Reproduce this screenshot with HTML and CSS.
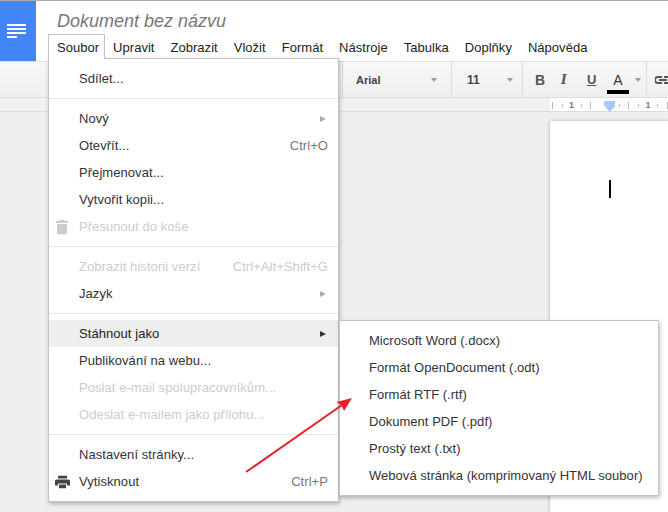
FILE: index.html
```html
<!DOCTYPE html>
<html lang="cs">
<head>
<meta charset="utf-8">
<title>Dokument bez názvu</title>
<link rel="stylesheet" href="styles.css">
</head>
<body>
<div class="app">
  <header class="header">
    <div class="logo">
      <svg width="19" height="14" viewBox="0 0 19 14"><path fill="#fff" d="M0 0h19v2H0zM0 4h19v2H0zM0 8h19v2H0zM0 12h10v2H0z"/></svg>
    </div>
    <div class="head-main">
      <div class="doc-title">Dokument bez názvu</div>
      <nav class="menubar">
        <span class="mb-item active">Soubor</span>
        <span class="mb-item">Upravit</span>
        <span class="mb-item">Zobrazit</span>
        <span class="mb-item">Vložit</span>
        <span class="mb-item">Formát</span>
        <span class="mb-item">Nástroje</span>
        <span class="mb-item">Tabulka</span>
        <span class="mb-item">Doplňky</span>
        <span class="mb-item">Nápověda</span>
      </nav>
    </div>
  </header>
  <div class="toolbar">
    <div class="tb-spacer"></div>
    <div class="tb-group tb-font"><span>Arial</span><i class="caret"></i></div>
    <div class="tb-group tb-size"><span>11</span><i class="caret"></i></div>
    <div class="tb-group tb-format">
      <b class="fmt fmt-b">B</b>
      <i class="fmt fmt-i">I</i>
      <u class="fmt fmt-u">U</u>
      <span class="fmt-color">A</span>
      <i class="caret"></i>
    </div>
    <div class="tb-link">
      <svg width="16" height="8" viewBox="0 0 16 8"><path fill="none" stroke="#555" stroke-width="2" d="M7 1H3a3 3 0 0 0 0 6h4M9 1h4a3 3 0 0 1 0 6H9M4 4h8"/></svg>
    </div>
  </div>
  <div class="ruler">
    <div class="ruler-track">
      <span class="tick"></span>
      <span class="tick-s"></span>
      <span class="num">1</span>
      <span class="tick-s"></span>
      <span class="tick"></span>
      <span class="empty"></span>
      <span class="marker"></span>
      <span class="tick-s"></span>
      <span class="tick"></span>
      <span class="tick-s"></span>
      <span class="num">1</span>
      <span class="tick-s"></span>
      <span class="tick"></span>
    </div>
  </div>
  <main class="canvas">
    <div class="page"><span class="cursor"></span></div>
  </main>
</div>

<div class="menu file-menu">
  <div class="item"><span>Sdílet...</span></div>
  <hr>
  <div class="item"><span>Nový</span><i class="arrow"></i></div>
  <div class="item"><span>Otevřít...</span><span class="key">Ctrl+O</span></div>
  <div class="item"><span>Přejmenovat...</span></div>
  <div class="item"><span>Vytvořit kopii...</span></div>
  <div class="item off">
    <svg class="ico ico-trash" width="12" height="15" viewBox="0 0 12 15"><path fill="#ccc" d="M0 1.500h3.500V0h5v1.500H12V3.500H0zM1 4.500h10V15H1z"/></svg>
    <span>Přesunout do koše</span>
  </div>
  <hr>
  <div class="item off"><span>Zobrazit historii verzí</span><span class="key">Ctrl+Alt+Shift+G</span></div>
  <div class="item"><span>Jazyk</span><i class="arrow"></i></div>
  <hr>
  <div class="item hover"><span>Stáhnout jako</span><i class="arrow"></i></div>
  <div class="item"><span>Publikování na webu...</span></div>
  <div class="item off"><span>Poslat e-mail spolupracovníkům...</span></div>
  <div class="item off"><span>Odeslat e-mailem jako přílohu...</span></div>
  <hr>
  <div class="item"><span>Nastavení stránky...</span></div>
  <div class="item">
    <svg class="ico" width="15" height="13" viewBox="0 0 15 13"><path fill="#444" d="M3 0h9v3H3zM1.500 4h12A1.500 1.500 0 0 1 15 5.500V10h-3V8H3v2H0V5.500A1.500 1.500 0 0 1 1.500 4zM4 9h7v4H4z"/></svg>
    <span>Vytisknout</span><span class="key">Ctrl+P</span>
  </div>
</div>

<div class="menu sub-menu">
  <div class="item"><span>Microsoft Word (.docx)</span></div>
  <div class="item"><span>Formát OpenDocument (.odt)</span></div>
  <div class="item"><span>Formát RTF (.rtf)</span></div>
  <div class="item"><span>Dokument PDF (.pdf)</span></div>
  <div class="item"><span>Prostý text (.txt)</span></div>
  <div class="item"><span>Webová stránka (komprimovaný HTML soubor)</span></div>
</div>

<svg class="annot" width="668" height="512" viewBox="0 0 668 512">
  <path fill="none" stroke="#e8202c" stroke-width="2" d="M246 472L342 405"/>
  <path fill="#e8202c" d="M352 398L336.500 402L341.500 405.500L344 411z"/>
</svg>
</body>
</html>
```
FILE: styles.css
```css
* { box-sizing: border-box; }
html, body { margin: 0; height: 100%; overflow: hidden; }
body { font-family: "Liberation Sans", Arial, sans-serif; font-size: 13px; color: #333; background: #fff; position: relative; }
.app { height: 512px; display: flex; flex-direction: column; border-top: 1px solid #aaa; }

.header { display: flex; height: 60px; flex: none; }
.logo { width: 36px; background: #4285f4; display: flex; align-items: center; padding-left: 7px; }
.logo svg { display: block; margin-top: -1px; }
.head-main { flex: 1; padding-left: 12px; display: flex; flex-direction: column; }
.doc-title { font-size: 18px; font-style: italic; color: #777; line-height: 22px; margin-top: 9px; padding-left: 9px; }
.menubar { display: flex; margin-top: 2px; letter-spacing: .03px; }
.mb-item { padding: 0 7px; border: 1px solid transparent; border-bottom: 0; height: 25px; line-height: 25px; color: #222; position: relative; }
.mb-item.active { border-color: #c4c4c4; background: #fff; z-index: 3; padding: 0 5px 0 8px; }

.toolbar { height: 37px; flex: none; display: flex; align-items: stretch; border-top: 1px solid #e0e0e0; border-bottom: 1px solid #dcdcdc; background: linear-gradient(#f8f8f8, #efefef); color: #444; font-size: 11px; font-weight: bold; }
.tb-spacer { width: 343px; flex: none; border-right: 1px solid #ddd; }
.tb-group { display: flex; flex: none; align-items: center; border-right: 1px solid #ddd; }
.tb-font { width: 109px; padding-left: 13px; justify-content: space-between; padding-right: 14px; }
.tb-size { width: 71px; padding-left: 15px; justify-content: space-between; padding-right: 9px; font-size: 12px; }
.tb-format { width: 124px; padding-left: 12px; }
.caret { width: 0; height: 0; border-left: 3.500px solid transparent; border-right: 3.500px solid transparent; border-top: 4px solid #999; }
.fmt { display: block; flex: none; font-size: 13px; width: 26px; color: #555; }
.fmt-b { font-size: 14px; }
.fmt-i { font-family: "DejaVu Serif", serif; font-size: 12px; font-weight: bold; }
.fmt-u { font-size: 13px; font-weight: bold; }
.fmt-color { flex: none; width: 22px; height: 24px; margin: 4px 6px 0 -6px; font-size: 14px; font-weight: normal; color: #333; text-align: center; border-bottom: 4px solid #000; line-height: 20px; }
.tb-link { padding-left: 8px; flex: none; display: flex; align-items: center; }

.ruler { height: 14px; flex: none; background: #f1f1f1; border-bottom: 1px solid #dcdcdc; }
.ruler-track { margin-left: 550px; height: 13px; padding-left: 2px; background: #fff; display: grid; grid-template-columns: repeat(13, 9.55px); align-items: center; justify-items: start; color: #777; font-size: 9px; font-weight: bold; line-height: 13px; }
.tick { width: 1px; height: 7px; background: #bbb; }
.tick-s { width: 1px; height: 3px; background: #bbb; }
.num { margin-left: -2px; }
.marker { width: 11px; height: 11px; margin-left: -5px; margin-top: 3px; background: #a8c7fa; clip-path: polygon(0 0, 100% 0, 100% 45%, 50% 100%, 0 45%); }

.canvas { flex: 1; background: #eee; padding: 9px 0 0 550px; display: flex; min-height: 0; }
.page { width: 200px; background: #fff; box-shadow: 0 0 3px rgba(0,0,0,.3); position: relative; }
.cursor { position: absolute; left: 59px; top: 59px; width: 2px; height: 18px; background: #000; }

.menu { position: absolute; background: #fff; border: 1px solid #c4c4c4; box-shadow: 1px 2px 4px rgba(0,0,0,.25); padding: 6px 0; z-index: 2; letter-spacing: .06px; }
.file-menu { left: 48px; top: 58px; width: 291px; }
.sub-menu { left: 339px; top: 320px; width: 320px; z-index: 3; letter-spacing: .03px; }
.sub-menu .item { padding-left: 29px; }
.menu hr { border: 0; border-top: 1px solid #e5e5e5; margin: 6px 0; height: 0; }
.item { height: 27px; padding: 0 10px 0 30px; display: flex; align-items: center; justify-content: space-between; position: relative; color: #333; white-space: nowrap; }
.item.off { color: #ccc; }
.item.hover { background: #eee; color: #222; }
.key { color: #777; }
.item.off .key { color: #ccc; }
.arrow { width: 0; height: 0; border-left: 6px solid #aaa; border-top: 3.500px solid transparent; border-bottom: 3.500px solid transparent; margin-right: 2px; }
.hover .arrow { border-left-color: #333; }
.ico { position: absolute; left: 6px; top: 50%; transform: translateY(-50%); }
.ico-trash { left: 7px; }
.annot { position: absolute; left: 0; top: 0; z-index: 5; pointer-events: none; }
```
